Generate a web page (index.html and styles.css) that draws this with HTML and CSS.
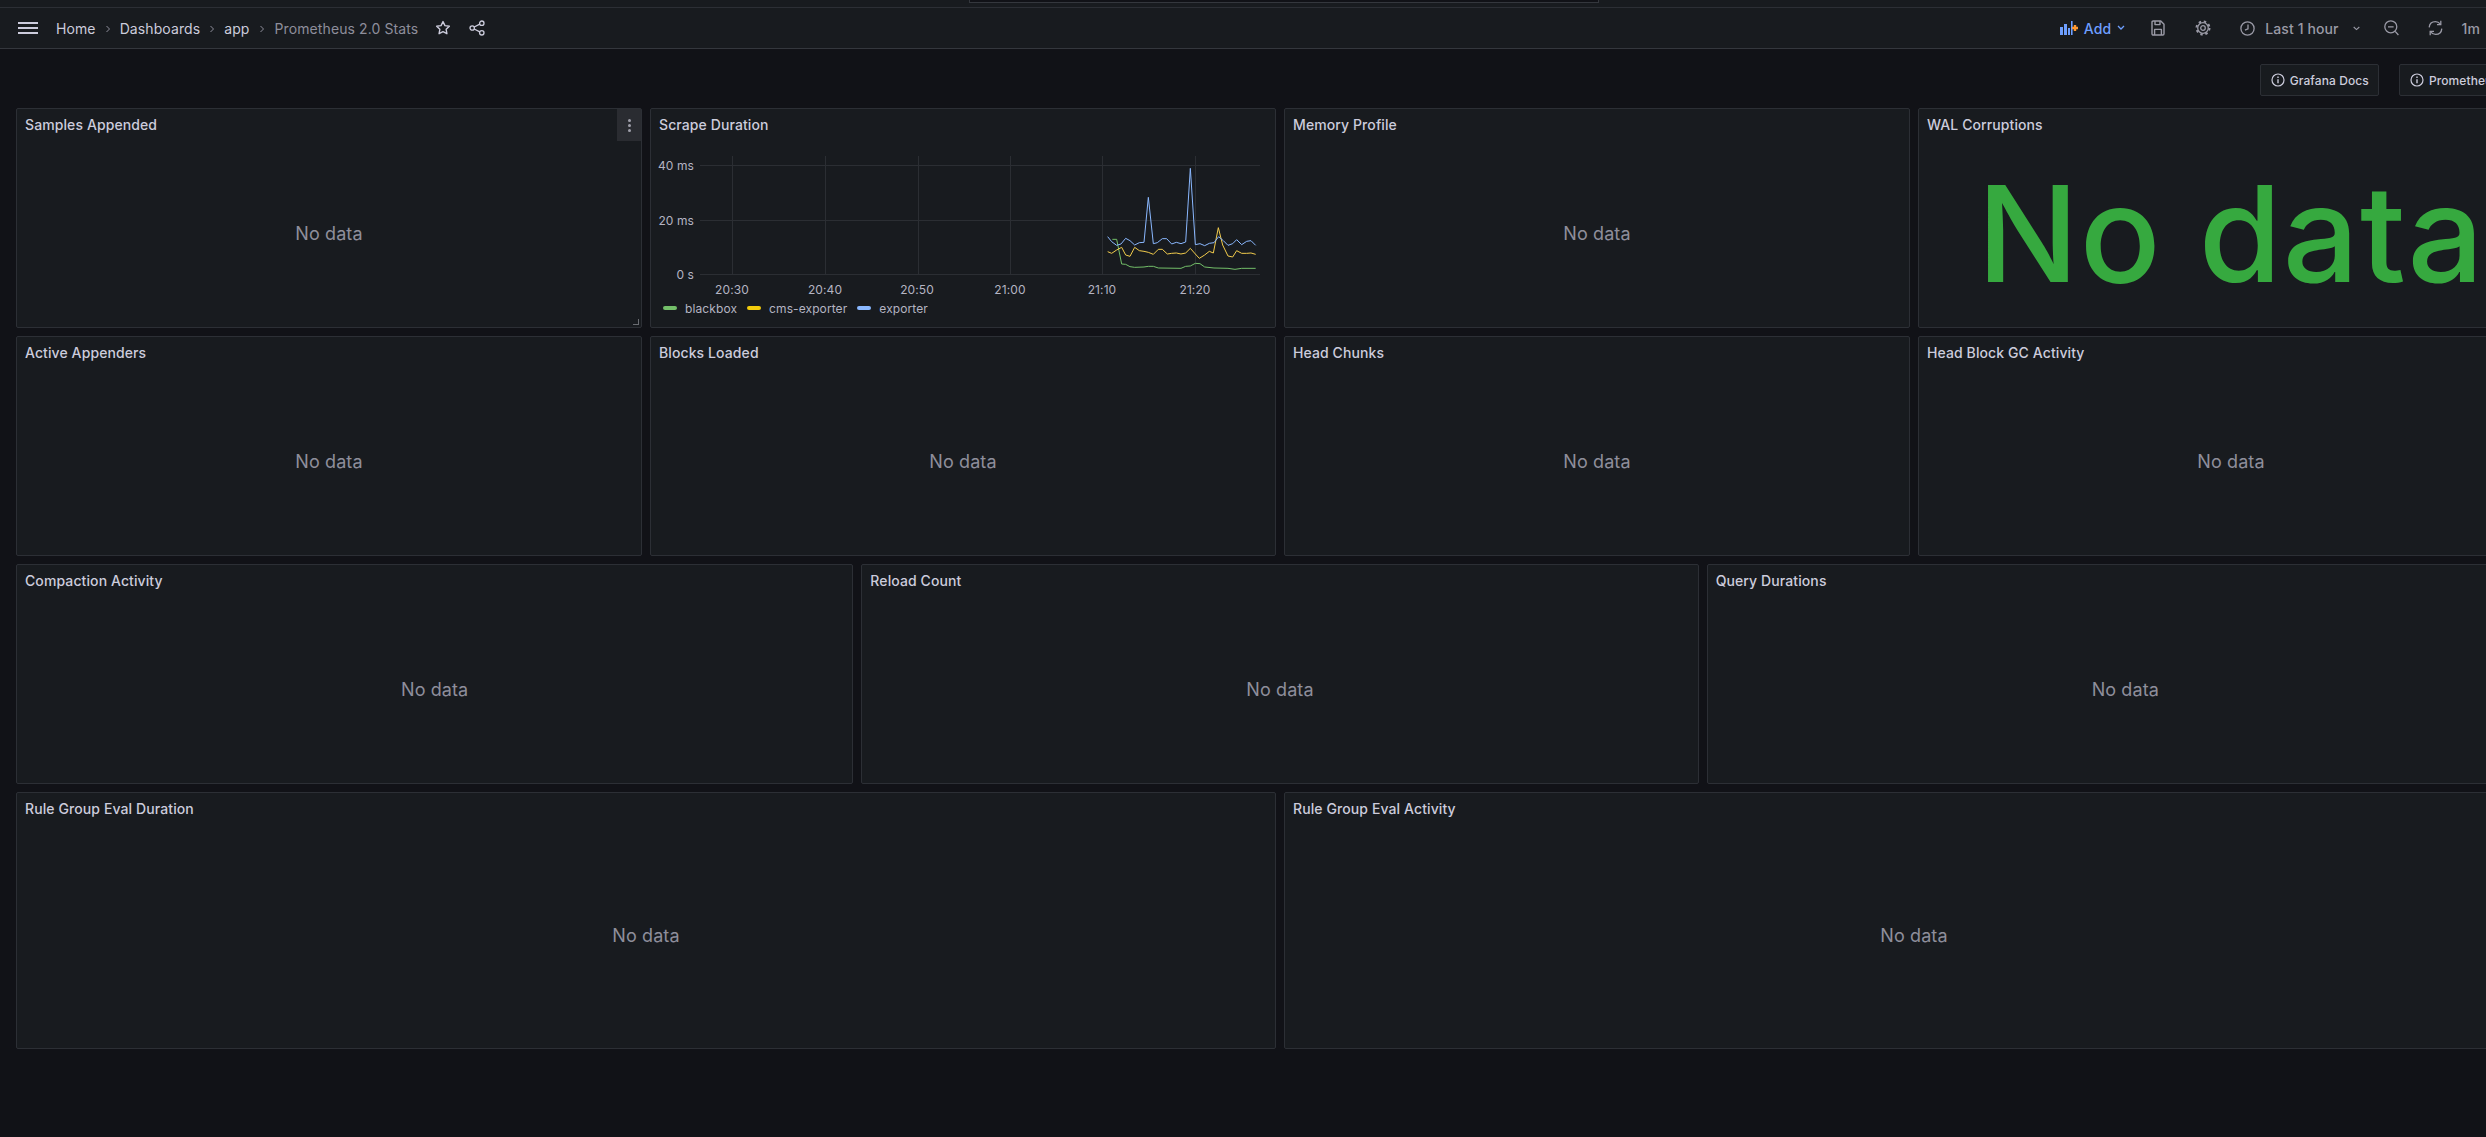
FILE: index.html
```html
<!DOCTYPE html>
<html>
  <head>
    <title>Prometheus 2.0 Stats</title>
    <link rel="stylesheet" href="styles.css">
  </head>
  <body>
    <div class="top-strip"><div class="search-stub"></div></div>

    <header class="toolbar">
      <svg class="menu-icon" width="20" height="12" viewBox="0 0 20 12"><path d="M0 1h20M0 6h20M0 11h20" stroke="#ccccdc" stroke-width="2"/></svg>
      <nav class="crumbs">
        <span>Home</span>
        <svg class="chev" width="6" height="8" viewBox="0 0 6 8"><path d="M1.5 1l3 3-3 3" fill="none" stroke="#8e8e9b" stroke-width="1"/></svg>
        <span>Dashboards</span>
        <svg class="chev" width="6" height="8" viewBox="0 0 6 8"><path d="M1.5 1l3 3-3 3" fill="none" stroke="#8e8e9b" stroke-width="1"/></svg>
        <span>app</span>
        <svg class="chev" width="6" height="8" viewBox="0 0 6 8"><path d="M1.5 1l3 3-3 3" fill="none" stroke="#8e8e9b" stroke-width="1"/></svg>
        <span class="current">Prometheus 2.0 Stats</span>
      </nav>
      <svg class="star" width="16" height="16" viewBox="0 0 16 16"><path d="M8 1.6l1.95 4 4.4.62-3.2 3.1.76 4.38L8 11.65 4.09 13.7l.76-4.38-3.2-3.1 4.4-.62z" fill="none" stroke="#ccccdc" stroke-width="1.4" stroke-linejoin="round"/></svg>
      <svg class="share" width="16" height="16" viewBox="0 0 16 16"><g fill="none" stroke="#ccccdc" stroke-width="1.3"><circle cx="12.8" cy="3.2" r="2.2"/><circle cx="12.8" cy="12.8" r="2.2"/><circle cx="3.2" cy="8" r="2.2"/><path d="M5.2 7l5.6-2.9M5.2 9l5.6 2.9"/></g></svg>

      <div class="tools">
        <button class="add-btn">
          <svg width="18" height="14" viewBox="0 0 18 14"><path d="M0 6h3v8H0zM4 3h3v11H4zM8 7h2v7H8zM11 0h1.6v14H11z" fill="#6e9fff"/><path d="M12 7h6M15 4v6" stroke="#ff9830" stroke-width="2.4"/></svg>
          <span>Add</span>
          <svg width="8" height="6" viewBox="0 0 8 6"><path d="M1 1l3 3 3-3" fill="none" stroke="#6e9fff" stroke-width="1.3"/></svg>
        </button>
        <svg class="tool-save" width="14" height="16" viewBox="0 0 14 16"><g fill="none" stroke="#9a9aa6" stroke-width="1.4" stroke-linejoin="round"><path d="M1 2.2c0-.7.5-1.2 1.2-1.2h7.6L13 4.2v9.6c0 .7-.5 1.2-1.2 1.2H2.2c-.7 0-1.2-.5-1.2-1.2z"/><path d="M4 1v3.6h5V1M3.6 15V9.400h6.800V15"/></g></svg>
        <svg class="tool-gear" width="16" height="16" viewBox="0 0 16 16"><g fill="none" stroke="#9a9aa6"><circle cx="8" cy="8" r="2.300" stroke-width="1.300"/><circle cx="8" cy="8" r="5.300" stroke-width="1.300"/><circle cx="8" cy="8" r="6.500" stroke-width="2" stroke-dasharray="2.400 2.705"/></g></svg>
        <div class="time-range">
          <svg width="15" height="15" viewBox="0 0 15 15"><g fill="none" stroke="#9a9aa6" stroke-width="1.3"><circle cx="7.5" cy="7.5" r="6.6"/><path d="M8 3.6v4.2L5 9.2"/></g></svg>
          <span>Last 1 hour</span>
          <svg class="range-chev" width="7" height="5" viewBox="0 0 7 5"><path d="M.7 1l2.8 2.6L6.3 1" fill="none" stroke="#9a9aa6" stroke-width="1.1"/></svg>
        </div>
        <svg class="tool-zoom" width="15" height="16" viewBox="0 0 15 16"><g fill="none" stroke="#9a9aa6" stroke-width="1.3"><circle cx="6.8" cy="6.8" r="6"/><path d="M4 6.8h5.6M11.2 11.4l3.2 3.6"/></g></svg>
        <svg class="tool-refresh" width="15" height="16" viewBox="0 0 15 16"><g fill="none" stroke="#9a9aa6" stroke-width="1.3"><path d="M1.2 7.4C1.5 4 4 1.6 7.4 1.6c2.2 0 3.7 1 5 2.6"/><path d="M13.8 8.6c-.3 3.4-2.8 5.8-6.2 5.8-2.2 0-3.7-1-5-2.6"/><path d="M12.8.8v3.8H9M2.2 15.2v-3.8H6"/></g></svg>
        <span class="refresh-rate">1m</span>
      </div>
    </header>

    <div class="links">
      <a class="link-btn">
        <svg width="14" height="14" viewBox="0 0 14 14"><g fill="none" stroke="#ccccdc" stroke-width="1.2"><circle cx="7" cy="7" r="6"/><path d="M7 6.2v4" stroke-width="1.4"/><path d="M7 3.6v1.5" stroke-width="1.4"/></g></svg>
        Grafana Docs
      </a>
      <a class="link-btn">
        <svg width="14" height="14" viewBox="0 0 14 14"><g fill="none" stroke="#ccccdc" stroke-width="1.2"><circle cx="7" cy="7" r="6"/><path d="M7 6.2v4" stroke-width="1.4"/><path d="M7 3.6v1.5" stroke-width="1.4"/></g></svg>
        Prometheus Docs
      </a>
    </div>

    <main class="dash">
      <section class="panel span-6">
        <h2 class="panel-title">Samples Appended</h2>
        <div class="no-data">No data</div>
        <div class="panel-menu"><i></i><i></i><i></i></div>
        <span class="resize-handle"></span>
      </section>

      <section class="panel span-6">
        <h2 class="panel-title">Scrape Duration</h2>
        <svg class="chart" width="624" height="156" viewBox="651 141 624 156">
          <g stroke="#2b2e33" stroke-width="1">
            <path d="M700 165.500H1260M700 220.500H1260M700 274.500H1260"/>
            <path d="M732.500 156V274M825.500 156V274M918.500 156V274M1010.500 156V274M1102.500 156V274M1195.500 156V274"/>
          </g>
          <g class="axis-y" text-anchor="end">
            <text x="694" y="169.500">40 ms</text>
            <text x="694" y="224.500">20 ms</text>
            <text x="694" y="278.500">0 s</text>
          </g>
          <g class="axis-x" text-anchor="middle">
            <text x="732" y="293.500">20:30</text>
            <text x="825" y="293.500">20:40</text>
            <text x="917" y="293.500">20:50</text>
            <text x="1010" y="293.500">21:00</text>
            <text x="1102" y="293.500">21:10</text>
            <text x="1195" y="293.500">21:20</text>
          </g>
          <g transform="translate(1060 130) scale(.33333)" fill="none" stroke-linejoin="round">
            <polyline class="line" stroke="#73bf69" points="157,328 170,328 185,402 197,403 210,410 224,412 252,411 265,409 280,409 295,414 363,415 377,409 391,408 406,400 420,401 434,411 462,414 504,415 525,418 545,415 587,415"/>
            <polyline class="line" stroke="#f2cc4c" points="143,365 155,370 170,360 185,352 197,375 210,379 224,352 238,362 252,364 265,367 280,373 295,358 307,358 322,372 335,370 349,369 363,372 377,369 391,355 406,372 418,385 434,375 448,364 460,369 475,293 488,345 504,378 518,381 530,362 545,370 560,370 573,369 587,373"/>
            <polyline class="line" stroke="#8ab8ff" points="143,320 155,335 170,346 183,342 197,325 210,332 224,345 238,338 252,337 265,202 280,341 292,338 307,326 320,326 335,342 349,337 363,341 377,336 391,115 406,344 420,341 434,347 448,340 462,338 476,320 490,332 504,346 518,341 530,329 545,344 560,334 573,332 587,346"/>
          </g>
        </svg>
        <div class="legend">
          <span class="legend-item"><i class="dash-green"></i>blackbox</span>
          <span class="legend-item"><i class="dash-yellow"></i>cms-exporter</span>
          <span class="legend-item"><i class="dash-blue"></i>exporter</span>
        </div>
      </section>

      <section class="panel span-6">
        <h2 class="panel-title">Memory Profile</h2>
        <div class="no-data">No data</div>
      </section>
      <section class="panel span-6">
        <h2 class="panel-title">WAL Corruptions</h2>
        <div class="no-data big">No data</div>
      </section>

      <section class="panel span-6">
        <h2 class="panel-title">Active Appenders</h2>
        <div class="no-data">No data</div>
      </section>
      <section class="panel span-6">
        <h2 class="panel-title">Blocks Loaded</h2>
        <div class="no-data">No data</div>
      </section>
      <section class="panel span-6">
        <h2 class="panel-title">Head Chunks</h2>
        <div class="no-data">No data</div>
      </section>
      <section class="panel span-6">
        <h2 class="panel-title">Head Block GC Activity</h2>
        <div class="no-data">No data</div>
      </section>

      <section class="panel span-8">
        <h2 class="panel-title">Compaction Activity</h2>
        <div class="no-data">No data</div>
      </section>
      <section class="panel span-8">
        <h2 class="panel-title">Reload Count</h2>
        <div class="no-data">No data</div>
      </section>
      <section class="panel span-8">
        <h2 class="panel-title">Query Durations</h2>
        <div class="no-data">No data</div>
      </section>

      <section class="panel span-12">
        <h2 class="panel-title">Rule Group Eval Duration</h2>
        <div class="no-data">No data</div>
      </section>
      <section class="panel span-12">
        <h2 class="panel-title">Rule Group Eval Activity</h2>
        <div class="no-data">No data</div>
      </section>
    </main>
  </body>
</html>
```

FILE: styles.css
```css
html, body {
  height: 100%;
}

body {
  margin: 0;
  overflow: hidden;
  background-color: #111217;
  color: #ccccdc;
  font-family: Inter, "Noto Sans", sans-serif;
  font-size: 14px;
  letter-spacing: .1px;
}

.top-strip {
  height: 7px;
  background-color: #181b1f;
  border-bottom: 1px solid #2c2f35;
  display: flex;
  justify-content: center;
}

.search-stub {
  width: 628px;
  height: 2px;
  margin-left: 81px;
  background-color: #111217;
  border: 1px solid #34373d;
  border-top: none;
}

.toolbar {
  height: 40px;
  display: flex;
  align-items: center;
  background-color: #181b1f;
  border-bottom: 1px solid #34373d;
  padding-left: 18px;
  white-space: nowrap;
}

.menu-icon {
  margin-right: 18px;
}

.crumbs {
  display: flex;
  align-items: center;
  gap: 9px;
}

.crumbs .current {
  color: #8e8e9b;
  margin-left: 1px;
}

.chev {
  margin-top: 1px;
}

.star {
  margin-left: 17px;
}

.share {
  margin-left: 18px;
}

.tools {
  margin-left: auto;
  display: flex;
  align-items: center;
  padding-right: 6px;
  color: #9a9aa6;
  font-weight: 500;
}

.add-btn {
  display: flex;
  align-items: center;
  gap: 6px;
  padding: 0;
  border: none;
  background: none;
  color: #6e9fff;
  font: inherit;
  letter-spacing: inherit;
}

.tool-save {
  margin-left: 26px;
}

.tool-gear {
  margin-left: 30px;
}

.time-range {
  margin-left: 29px;
  display: flex;
  align-items: center;
  gap: 10px;
}

.range-chev {
  margin-left: 4px;
}

.tool-zoom {
  margin-left: 24px;
}

.tool-refresh {
  margin-left: 29px;
}

.refresh-rate {
  margin-left: 19px;
}

.links {
  width: 2542px;
  height: 32px;
  margin: 15px 0 12px;
  display: flex;
  justify-content: flex-end;
  gap: 20px;
}

.link-btn {
  display: flex;
  align-items: center;
  gap: 5px;
  padding: 0 9px 0 10px;
  background-color: #181b1f;
  border: 1px solid #2c2f35;
  border-radius: 2px;
  font-size: 12px;
  font-weight: 500;
  white-space: nowrap;
}

.dash {
  width: 2528px;
  margin-left: 16px;
  display: grid;
  grid-template-columns: repeat(24, 1fr);
  grid-template-rows: 220px 220px 220px 257px;
  gap: 8px;
}

.panel {
  position: relative;
  display: flex;
  flex-direction: column;
  min-width: 0;
  background-color: #181b1f;
  border: 1px solid #2c2f35;
  border-radius: 2px;
}

.span-6 {
  grid-column: span 6;
}

.span-8 {
  grid-column: span 8;
}

.span-12 {
  grid-column: span 12;
}

.panel-title {
  margin: 0;
  height: 32px;
  padding: 0 8px;
  flex: none;
  font-size: 14px;
  font-weight: 500;
  line-height: 32px;
  color: #ccccdc;
}

.no-data {
  flex: 1;
  display: flex;
  align-items: center;
  justify-content: center;
  padding-bottom: 2px;
  font-size: 18px;
  color: #8e8e9b;
}

.no-data.big {
  font-size: 134px;
  font-weight: 500;
  letter-spacing: 1.2px;
  color: #36a93f;
  white-space: nowrap;
}

.panel-menu {
  position: absolute;
  top: 0;
  right: 0;
  width: 24px;
  height: 32px;
  display: flex;
  flex-direction: column;
  align-items: center;
  justify-content: center;
  gap: 2px;
  background-color: #2a2c31;
}

.panel-menu i {
  width: 3px;
  height: 3px;
  border-radius: 50%;
  background-color: #a0a0ab;
}

.resize-handle {
  position: absolute;
  right: 2px;
  bottom: 2px;
  width: 5px;
  height: 5px;
  border-right: 1.5px solid #6a6c72;
  border-bottom: 1.5px solid #6a6c72;
}

.chart {
  display: block;
  flex: none;
}

.chart text {
  font-size: 12px;
  fill: #b4b4c2;
}

.line {
  stroke-width: 1;
  vector-effect: non-scaling-stroke;
}

.legend {
  display: flex;
  align-items: center;
  gap: 10px;
  height: 22px;
  padding-left: 12px;
  font-size: 12px;
  color: #b4b4c2;
}

.legend-item {
  display: flex;
  align-items: center;
  gap: 8px;
}

.legend-item i {
  width: 14px;
  height: 4px;
  border-radius: 2px;
}

.dash-green {
  background-color: #73bf69;
}

.dash-yellow {
  background-color: #f2cc0c;
}

.dash-blue {
  background-color: #8ab8ff;
}
```
